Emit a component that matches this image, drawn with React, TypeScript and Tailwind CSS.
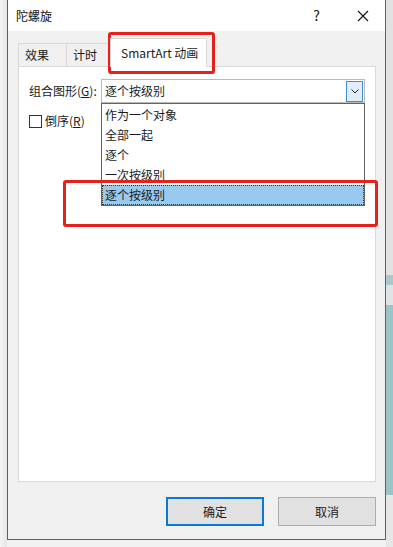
import React from "react";

const font = { fontFamily: '"Segoe UI", "Noto Sans CJK SC", "Noto Sans", sans-serif' };

const items = ["作为一个对象", "全部一起", "逐个", "一次按级别", "逐个按级别"];

export default function App() {
  return (
    <div
      className="relative flex h-[547px] w-[393px] overflow-hidden bg-[#f2f2f2]"
      style={font}
    >
      <div className="w-[7px] bg-gradient-to-r from-[#f4f4f4] to-[#e6e6e6]" />
      <div className="flex h-[540px] w-[379px] flex-col border-x border-b border-[#606060] bg-[#f0f0f0]">
        {/* title bar */}
        <div className="flex h-[31px] items-center bg-white pl-[8px] text-[12px] text-[#111]">
          <span>陀螺旋</span>
          <span className="ml-auto mr-[37px] text-[14px]">?</span>
          <svg width="12" height="12" viewBox="0 0 12 12" className="mr-[16px]">
            <path d="M1 1L11 11M11 1L1 11" stroke="#111" strokeWidth="1.1" />
          </svg>
        </div>

        {/* tabs */}
        <div className="mt-[7px] flex items-end pl-[10px]">
          <div className="flex h-[23px] w-[48px] items-center border border-b-0 border-r-0 border-[#d9d9d9] pl-[6px] text-[12px] text-[#1a1a1a]">
            效果
          </div>
          <div className="flex h-[23px] w-[43px] items-center border border-b-0 border-[#d9d9d9] pl-[6px] text-[12px] text-[#1a1a1a]">
            计时
          </div>
          <div className="relative z-10 -mb-px ml-[1px] flex h-[29px] w-[97px] items-start border border-b-0 border-[#d9d9d9] bg-white pl-[10px] pt-[5px] text-[12px] text-[#1a1a1a]">
            SmartArt 动画
          </div>
        </div>

        {/* panel */}
        <div className="relative ml-[10px] h-[416px] w-[358px] border border-[#d9d9d9] bg-white">
          <div className="flex items-center pl-[10px] pt-[12px]">
            <span className="w-[72px] text-[12px] text-[#1a1a1a]">
              组合图形(<span className="underline">G</span>):
            </span>
            <div className="flex h-[24px] w-[264px] items-center border border-[#b9b9b9] bg-white pl-[3px] text-[12px] text-[#1a1a1a]">
              <span>逐个按级别</span>
              <div className="ml-auto mr-[1px] flex h-[21px] w-[17px] items-center justify-center border border-[#3c8fd6] bg-[#e1eefa]">
                <svg width="8" height="5" viewBox="0 0 8 5">
                  <path d="M0.5 0.5L4 4L7.5 0.5" stroke="#222" strokeWidth="1" fill="none" />
                </svg>
              </div>
            </div>
          </div>

          <div className="mt-[9px] flex items-center pl-[10px]">
            <div className="h-[13px] w-[13px] border border-[#333] bg-white" />
            <span className="ml-[3px] text-[12px] text-[#1a1a1a]">
              倒序(<span className="underline">R</span>)
            </span>
          </div>

          {/* dropdown list */}
          <div className="absolute left-[82px] top-[36px] w-[264px] border border-[#646464] bg-white pt-[1px] text-[12px] text-[#1a1a1a]">
            {items.map((it, i) =>
              i === items.length - 1 ? (
                <div
                  key={it}
                  className="flex h-[20px] items-center border border-dotted border-[#333] bg-[#99c9ef] pl-[2px]"
                >
                  {it}
                </div>
              ) : (
                <div key={it} className="flex h-[20px] items-center pl-[3px]">
                  {it}
                </div>
              )
            )}
          </div>
        </div>

        {/* buttons */}
        <div className="mt-[15px] flex justify-end gap-[14px] pr-[9px]">
          <button className="flex h-[29px] w-[98px] items-center justify-center border-2 border-[#0a78d7] bg-[#e1e1e1] text-[12px] text-[#1a1a1a]">
            确定
          </button>
          <button className="flex h-[29px] w-[98px] items-center justify-center border border-[#adadad] bg-[#e1e1e1] text-[12px] text-[#1a1a1a]">
            取消
          </button>
        </div>
      </div>

      {/* right edge background */}
      <div className="flex w-[7px] flex-col bg-[#d8d8d8]">
        <div className="h-[275px] bg-[#e2e2e2]" />
        <div className="h-[10px] bg-[#a9c9cb]" />
        <div className="h-[20px] bg-[#dfe4e4]" />
        <div className="h-[190px] bg-[#9dc3c6]" />
        <div className="flex-1 bg-[#e6e6e6]" />
      </div>

      {/* red annotation boxes */}
      <div className="pointer-events-none absolute left-[108px] top-[32px] h-[42px] w-[107px] rounded-[3px] border-[3px] border-[#e3231b]" />
      <div className="pointer-events-none absolute left-[63px] top-[180px] h-[47px] w-[315px] rounded-[3px] border-[3px] border-[#e3231b]" />
    </div>
  );
}
